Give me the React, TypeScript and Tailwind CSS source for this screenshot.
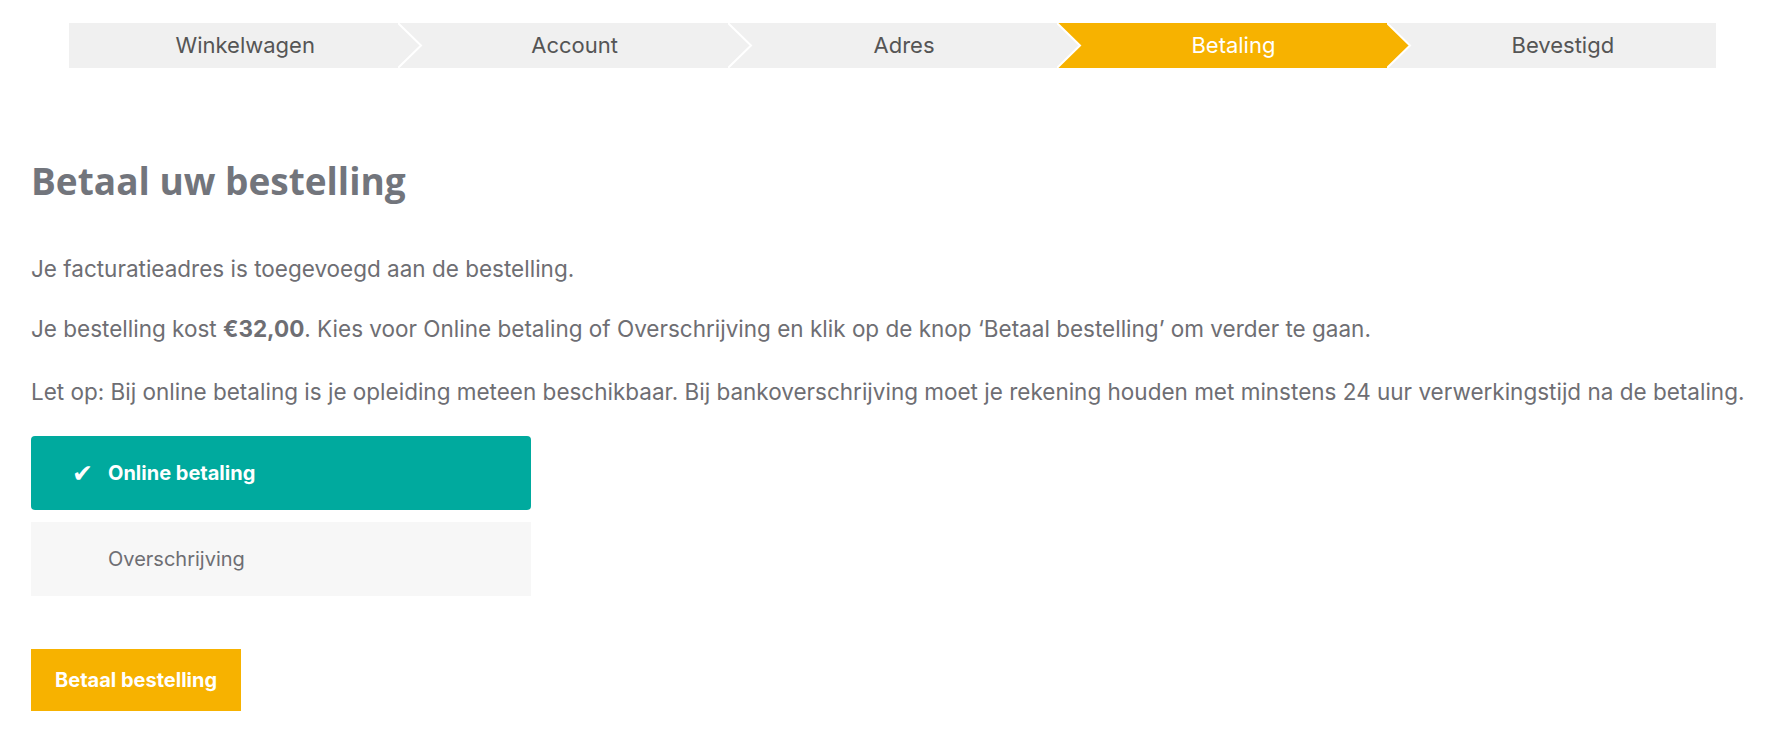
const STEPS = ["Winkelwagen", "Account", "Adres", "Betaling", "Bevestigd"];
const ACTIVE = 3;

function Step({ label, index }: { label: string; index: number }) {
  const active = index === ACTIVE;
  const fill = active ? "#f7b200" : "#f0f0f0";
  const last = index === STEPS.length - 1;
  return (
    <div
      className={
        "relative flex flex-1 items-center justify-center pl-[23px] text-[22px] " +
        (active ? "bg-[#f7b200] text-white" : "bg-[#f0f0f0] text-[#555555]")
      }
      style={{ zIndex: STEPS.length - index }}
    >
      {label}
      {!last && (
        <svg
          className="absolute left-full top-0 h-full"
          width="25"
          viewBox="0 0 25 45"
          preserveAspectRatio="none"
        >
          <polygon points="0,0 23,22.5 0,45" fill={fill} />
          <polyline points="0,0 23,22.5 0,45" fill="none" stroke="#ffffff" strokeWidth="2" />
        </svg>
      )}
    </div>
  );
}

export default function App() {
  return (
    <div className="min-h-[743px] bg-white px-[31px] pt-[23px] font-['Inter',sans-serif] text-[#6e6e73]">
      <div className="mx-[38px] flex h-[45px]">
        {STEPS.map((s, i) => (
          <Step key={s} label={s} index={i} />
        ))}
      </div>

      <h1 className="mt-[91px] font-['Open_Sans',sans-serif] text-[37px] font-bold leading-[44px] text-[#72757c]">
        Betaal uw bestelling
      </h1>

      <p className="mt-[50px] text-[22.5px] leading-[32px]">Je facturatieadres is toegevoegd aan de bestelling.</p>
      <p className="mt-[28px] text-[22.5px] leading-[32px]">
        Je bestelling kost <strong className="font-bold">€32,00</strong>. Kies voor Online betaling of Overschrijving en
        klik op de knop ‘Betaal bestelling’ om verder te gaan.
      </p>
      <p className="mt-[31px] text-[22.5px] leading-[32px]">
        Let op: Bij online betaling is je opleiding meteen beschikbaar. Bij bankoverschrijving moet je rekening houden met
        minstens 24 uur verwerkingstijd na de betaling.
      </p>

      <div className="mt-[28px] flex w-[500px] flex-col gap-[12px]">
        <div className="flex h-[74px] items-center rounded-[4px] bg-[#00aa9e] text-white">
          <span className="w-[77px] pl-[41px] font-['DejaVu_Sans',sans-serif] text-[25px] font-bold leading-none">
            ✔
          </span>
          <span className="text-[20px] font-bold">Online betaling</span>
        </div>
        <div className="flex h-[74px] items-center bg-[#f7f7f7] pl-[77px] text-[20px] text-[#6e6e73]">
          Overschrijving
        </div>
      </div>

      <button className="mt-[53px] h-[62px] bg-[#f7b200] px-[24px] text-[20px] font-bold text-white">
        Betaal bestelling
      </button>
    </div>
  );
}
